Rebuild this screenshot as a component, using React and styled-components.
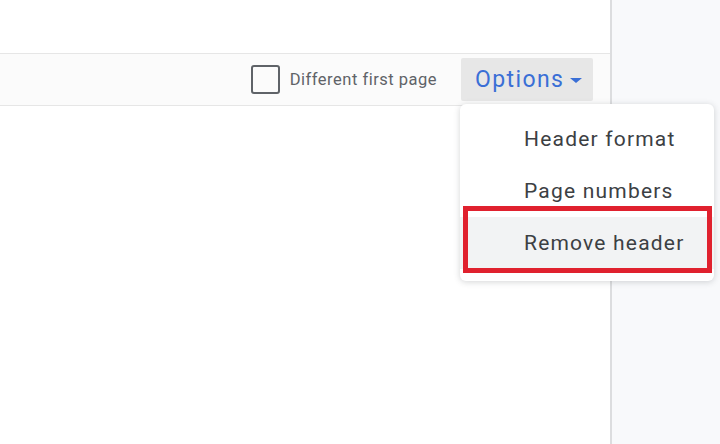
import React from "react";
import styled, { createGlobalStyle } from "styled-components";

const GlobalStyle = createGlobalStyle`
  html, body {
    margin: 0;
    padding: 0;
    background: #ffffff;
    font-family: Roboto, "Liberation Sans", sans-serif;
  }
`;

const Screen = styled.div`
  display: flex;
  width: 720px;
  height: 444px;
  overflow: hidden;
`;

// 문서 영역
const PageColumn = styled.div`
  width: 610px;
  flex: none;
  display: flex;
  flex-direction: column;
  background: #ffffff;
  border-right: 2px solid #dcdddf;
`;

const SidePanel = styled.div`
  flex: 1;
  background: #f8f9fb;
`;

const TopArea = styled.div`
  height: 53px;
`;

const Toolbar = styled.div`
  height: 51px;
  display: flex;
  align-items: center;
  justify-content: flex-end;
  padding-right: 17px;
  gap: 24px;
  background: #fbfbfb;
  border-top: 1px solid #e6e6e6;
  border-bottom: 1px solid #e6e6e6;
`;

const CheckLabel = styled.label`
  display: flex;
  align-items: center;
  gap: 10px;
  font-size: 16.5px;
  letter-spacing: 0.5px;
  color: #5f6368;
`;

const CheckBox = styled.span`
  width: 25px;
  height: 25px;
  border: 2px solid #5f6368;
  border-radius: 3px;
`;

const OptionsWrap = styled.div`
  position: relative;
`;

const OptionsButton = styled.div`
  width: 132px;
  height: 43px;
  box-sizing: border-box;
  padding-left: 14px;
  display: flex;
  align-items: center;
  gap: 6px;
  background: #e7e7e7;
  border-radius: 2px;
  color: #3a6fd6;
  font-size: 23px;
  letter-spacing: 1.4px;
`;

const Caret = styled.span`
  width: 0;
  height: 0;
  margin-top: 2px;
  border-left: 6px solid transparent;
  border-right: 6px solid transparent;
  border-top: 5px solid #3a6fd6;
`;

const Menu = styled.div`
  position: absolute;
  top: 46px;
  left: -1px;
  width: 254px;
  padding: 9px 0 12px;
  background: #ffffff;
  border-radius: 6px;
  box-shadow: 0 1px 6px rgba(60, 64, 67, 0.22);
  z-index: 2;
`;

const MenuItem = styled.div`
  position: relative;
  height: 52px;
  display: flex;
  align-items: center;
  padding-left: 64px;
  font-size: 21px;
  letter-spacing: 1.2px;
  color: #3c4043;
  background: ${(props) => (props.active ? "#f2f3f4" : "transparent")};

  ${(props) =>
    props.marked &&
    `
    &::after {
      content: "";
      position: absolute;
      top: -11px;
      bottom: -4px;
      left: 3px;
      right: 2px;
      border: 5px solid #e0212e;
    }
  `}
`;

const menuItems = [
  { label: "Header format" },
  { label: "Page numbers" },
  { label: "Remove header", active: true, marked: true },
];

const App = () => {
  return (
    <>
      <GlobalStyle />
      <Screen>
        <PageColumn>
          <TopArea />
          <Toolbar>
            <CheckLabel>
              <CheckBox />
              Different first page
            </CheckLabel>
            <OptionsWrap>
              <OptionsButton>
                Options
                <Caret />
              </OptionsButton>
              <Menu>
                {menuItems.map((item) => (
                  <MenuItem key={item.label} active={item.active} marked={item.marked}>
                    {item.label}
                  </MenuItem>
                ))}
              </Menu>
            </OptionsWrap>
          </Toolbar>
        </PageColumn>
        <SidePanel />
      </Screen>
    </>
  );
};

export default App;
